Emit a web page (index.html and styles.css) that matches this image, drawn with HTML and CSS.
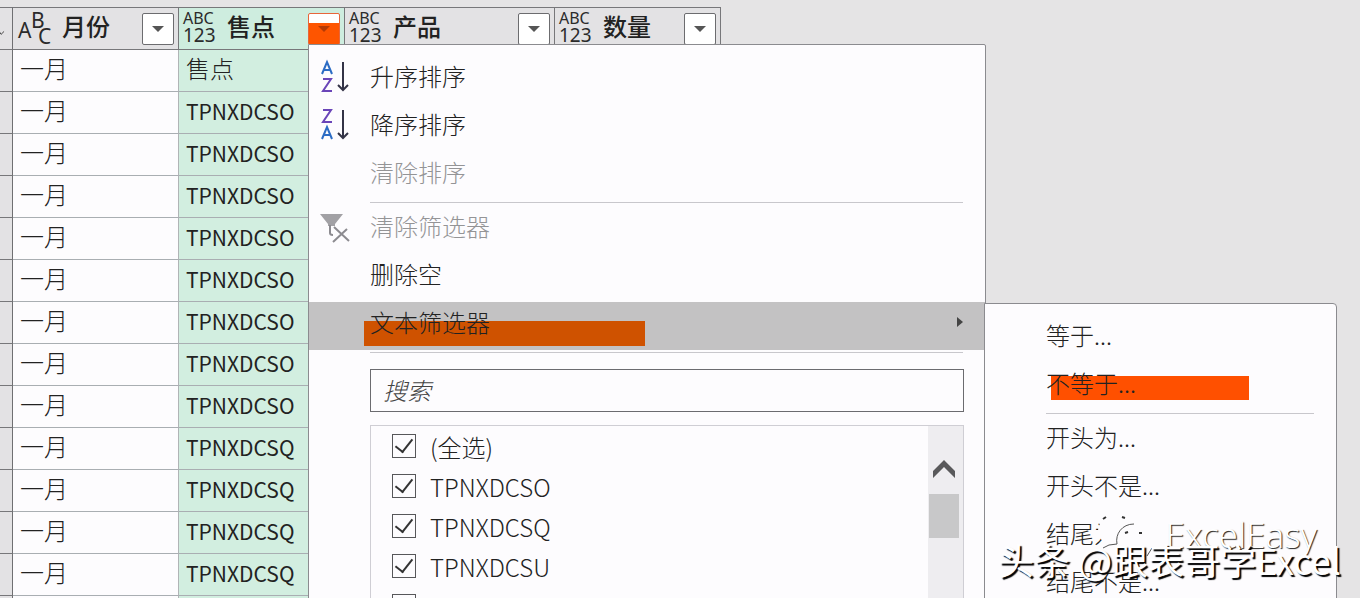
FILE: index.html
```html
<!DOCTYPE html>
<html lang="zh-CN">

<head>
    <meta charset="UTF-8">
    <meta name="viewport" content="width=device-width, initial-scale=1.0">
    <title>售点</title>
    <link rel="stylesheet" href="styles.css">
</head>

<body>

    <main class="editor">
        <table class="grid">
            <thead>
                <tr>
                    <th class="gutter"><svg class="corner" viewBox="0 0 12 42"><path d="M-1 24l2 3 3-3" /></svg></th>
                    <th class="month">
                        <div class="head">
                            <svg class="type" viewBox="0 0 36 36">
                                <text class="letter" x="1" y="27">A</text>
                                <text class="letter" x="14" y="17">B</text>
                                <text class="letter" x="21" y="33">C</text>
                            </svg>
                            <span class="title title-wide">月份</span>
                            <button class="filter" aria-label="筛选月份"><svg viewBox="0 0 12 6"><path d="M0 0h12L6 6z" /></svg></button>
                        </div>
                    </th>
                    <th class="site">
                        <div class="head">
                            <svg class="type" viewBox="0 0 36 36">
                                <text class="abc" x="0" y="13">ABC</text>
                                <text class="num" x="0" y="31">123</text>
                            </svg>
                            <span class="title">售点</span>
                            <button class="filter filter-open" aria-label="筛选售点"><svg viewBox="0 0 12 6"><path d="M0 0h12L6 6z" /></svg></button>
                        </div>

                        <div class="menu">
                            <button class="item">
                                <svg class="icon" viewBox="0 0 32 36">
                                    <path class="blue" d="M3 16L8 4l5 12M5 12h6" />
                                    <path class="purple" d="M4 21h8L4 33h9" />
                                    <path class="ink" d="M24 4v28M19 27l5 5 5-5" />
                                </svg>
                                升序排序
                            </button>
                            <button class="item">
                                <svg class="icon" viewBox="0 0 32 36">
                                    <path class="purple" d="M4 4h8L4 16h9" />
                                    <path class="blue" d="M3 33l5-12 5 12M5 29h6" />
                                    <path class="ink" d="M24 4v28M19 27l5 5 5-5" />
                                </svg>
                                降序排序
                            </button>
                            <button class="item" disabled>清除排序</button>
                            <hr class="line">
                            <button class="item" disabled>
                                <svg class="icon" viewBox="0 0 32 36">
                                    <path class="funnel" d="M1 6h23l-8 10v2H9v-2z" />
                                    <path class="grey" d="M11 17v8q0 2 3 2M15 19l15 14M28 21L14 34" />
                                </svg>
                                清除筛选器
                            </button>
                            <button class="item">删除空</button>
                            <button class="item item-active">
                                <span class="mark"></span>
                                <span class="label">文本筛选器</span>
                                <svg class="arrow" viewBox="0 0 6 10"><path d="M0 0l6 5-6 5z" /></svg>
                            </button>
                            <hr class="line line-tight">
                            <input class="search" type="text" placeholder="搜索" aria-label="搜索">
                            <div class="values">
                                <div class="options">
                                    <label><input type="checkbox" checked>(全选)</label>
                                    <label><input type="checkbox" checked>TPNXDCSO</label>
                                    <label><input type="checkbox" checked>TPNXDCSQ</label>
                                    <label><input type="checkbox" checked>TPNXDCSU</label>
                                    <label><input type="checkbox" checked aria-label="TPNXDCSX"></label>
                                </div>
                                <div class="scrollbar">
                                    <svg viewBox="0 0 22 18"><path d="M0 11L11 0l11 11v7L11 7 0 18z" /></svg>
                                    <div class="thumb"></div>
                                </div>
                            </div>

                            <div class="submenu">
                                <button class="item">等于...</button>
                                <button class="item">
                                    <span class="mark mark-bright"></span>
                                    <span class="label">不等于...</span>
                                </button>
                                <hr class="line">
                                <button class="item">开头为...</button>
                                <button class="item">开头不是...</button>
                                <button class="item">结尾为...</button>
                                <button class="item">结尾不是...</button>
                            </div>
                        </div>
                    </th>
                    <th class="product">
                        <div class="head">
                            <svg class="type" viewBox="0 0 36 36">
                                <text class="abc" x="0" y="13">ABC</text>
                                <text class="num" x="0" y="31">123</text>
                            </svg>
                            <span class="title">产品</span>
                            <button class="filter" aria-label="筛选产品"><svg viewBox="0 0 12 6"><path d="M0 0h12L6 6z" /></svg></button>
                        </div>
                    </th>
                    <th class="amount">
                        <div class="head">
                            <svg class="type" viewBox="0 0 36 36">
                                <text class="abc" x="0" y="13">ABC</text>
                                <text class="num" x="0" y="31">123</text>
                            </svg>
                            <span class="title">数量</span>
                            <button class="filter" aria-label="筛选数量"><svg viewBox="0 0 12 6"><path d="M0 0h12L6 6z" /></svg></button>
                        </div>
                    </th>
                </tr>
            </thead>
            <tbody>
                <tr><td class="gutter"></td><td>一月</td><td class="picked">售点</td></tr>
                <tr><td class="gutter"></td><td>一月</td><td class="picked">TPNXDCSO</td></tr>
                <tr><td class="gutter"></td><td>一月</td><td class="picked">TPNXDCSO</td></tr>
                <tr><td class="gutter"></td><td>一月</td><td class="picked">TPNXDCSO</td></tr>
                <tr><td class="gutter"></td><td>一月</td><td class="picked">TPNXDCSO</td></tr>
                <tr><td class="gutter"></td><td>一月</td><td class="picked">TPNXDCSO</td></tr>
                <tr><td class="gutter"></td><td>一月</td><td class="picked">TPNXDCSO</td></tr>
                <tr><td class="gutter"></td><td>一月</td><td class="picked">TPNXDCSO</td></tr>
                <tr><td class="gutter"></td><td>一月</td><td class="picked">TPNXDCSO</td></tr>
                <tr><td class="gutter"></td><td>一月</td><td class="picked">TPNXDCSQ</td></tr>
                <tr><td class="gutter"></td><td>一月</td><td class="picked">TPNXDCSQ</td></tr>
                <tr><td class="gutter"></td><td>一月</td><td class="picked">TPNXDCSQ</td></tr>
                <tr><td class="gutter"></td><td>一月</td><td class="picked">TPNXDCSQ</td></tr>
                <tr><td class="gutter"></td><td></td><td class="picked"></td></tr>
            </tbody>
        </table>
    </main>

    <!-- Watermarks over the page -->
    <div class="watermark account">
        <svg viewBox="0 0 56 44">
            <path class="bubble" d="M20 3C9 3 2 10 2 18c0 5 3 9 7 12l-2 6 7-3 6 1c10 0 18-7 18-15S31 3 20 3z" />
            <path class="bubble" d="M37 15c-9 0-16 6-16 13s7 13 16 13l5-1 6 3-1-5c4-3 6-6 6-10 0-7-7-13-16-13z" />
            <path class="rim" d="M7 35l6-3 8-1c-2-10 5-20 17-20M51 43l5-8" />
            <path class="eye" d="M7 6l3-2M26 4l3 1M29 20l3-1M43 20h3" />
        </svg>
        <span>ExcelEasy</span>
    </div>
    <div class="watermark author">头条 @跟表哥学Excel</div>

</body>

</html>
```
FILE: styles.css
```css
* {
    box-sizing: border-box;
}

body {
    margin: 0;
    position: relative;
    height: 100vh;
    overflow: hidden;
    background: #e5e4e5;
    color: #222;
    font-family: 'Noto Sans CJK SC', sans-serif;
    font-weight: 300;
}

button,
input {
    font: inherit;
    color: inherit;
}

.editor {
    padding-top: 7px;
}

/* Data grid */
.grid {
    border-collapse: separate;
    border-spacing: 0;
    table-layout: fixed;
    width: 721px;
}

th {
    height: 43px;
    padding: 0;
    font-weight: 300;
    text-align: left;
    border-top: 1px solid #77777a;
    border-right: 1px solid #77777a;
    border-bottom: 1px solid #77777a;
    background: #e3e2e4;
}

td {
    height: 42px;
    padding: 0 7px 5px;
    font-size: 24px;
    line-height: 36px;
    background: #fdfcfe;
    border-right: 1px solid #b0b4b6;
    border-bottom: 1px solid #a9aeb2;
}

.gutter {
    width: 13px;
    padding: 0;
    background: #e3e2e4;
    border-right: 1px solid #6f6f72;
    border-bottom-color: #77777a;
}

.month {
    width: 166px;
}

.site {
    width: 166px;
    position: relative;
    background: #ceeddf;
}

.product {
    width: 210px;
}

.amount {
    width: 166px;
}

.picked {
    padding-bottom: 3px;
    background: #d2eee0;
    font-size: 21px;
    font-weight: 400;
}

tr:first-child .picked {
    padding-bottom: 5px;
    font-size: 24px;
    font-weight: 300;
}

.corner {
    display: block;
    width: 12px;
    height: 41px;
    fill: none;
    stroke: #444;
}

.head {
    display: flex;
    align-items: center;
    height: 41px;
    padding: 0 4px;
}

.type {
    flex: none;
    width: 36px;
    height: 36px;
    overflow: visible;
    fill: #2b2b2b;
    font-family: 'Noto Sans', sans-serif;
    font-weight: 400;
}

.letter {
    font-size: 21px;
}

.abc {
    font-size: 16px;
}

.num {
    font-size: 19px;
}

.title {
    flex: 1;
    padding-left: 8px;
    padding-bottom: 6px;
    font-size: 24px;
    font-weight: 500;
    line-height: 34px;
}

.title-wide {
    padding-left: 9px;
}

.filter {
    display: flex;
    align-items: center;
    justify-content: center;
    width: 32px;
    height: 32px;
    padding: 0;
    background: #fff;
    border: 1px solid #6c6c6f;
    border-radius: 2px;
}

.filter svg {
    width: 12px;
    height: 6px;
    fill: #555;
}

.filter-open {
    background: linear-gradient(#fff 9px, #fe5500 9px);
    border-color: #e8653a;
}

.filter-open svg {
    fill: #b53a05;
}

/* Filter drop-down */
.menu {
    position: absolute;
    z-index: 1;
    top: 36px;
    left: 129px;
    width: 678px;
    padding-top: 8px;
    background: #fdfcfe;
    border: 1px solid #8b8b8f;
    border-radius: 0 2px 0 0;
}

.item {
    display: flex;
    align-items: center;
    position: relative;
    width: 100%;
    height: 48px;
    padding: 0 22px 2px 61px;
    border: 0;
    background: none;
    font-size: 24px;
    line-height: 36px;
    text-align: left;
}

.item:disabled {
    color: #949496;
}

.item-active {
    margin-top: 3px;
    padding-bottom: 8px;
    background: #c3c2c3;
}

.label {
    position: relative;
    flex: 1;
}

.icon {
    width: 32px;
    height: 36px;
    margin-left: -51px;
    margin-right: 19px;
    fill: none;
    stroke-width: 2;
}

.blue {
    stroke: #2c6cc4;
}

.purple {
    stroke: #6a45b8;
}

.ink {
    stroke: #333346;
}

.grey {
    stroke: #8c8b90;
}

.funnel {
    fill: #a2a1a5;
}

.arrow {
    width: 6px;
    height: 10px;
    fill: #444;
}

/* Highlighter strokes */
.mark {
    position: absolute;
    top: 19px;
    left: 55px;
    width: 281px;
    height: 25px;
    background: #cf5200;
}

.mark-bright {
    top: 16px;
    left: 66px;
    width: 198px;
    height: 24px;
    background: #ff5000;
}

.line {
    height: 6px;
    margin: 0 22px 0 61px;
    border: 0;
    border-bottom: 1px solid #c8c7cc;
}

.line-tight {
    height: 3px;
}

.search {
    display: block;
    width: calc(100% - 82px);
    height: 43px;
    margin: 16px 21px 13px 61px;
    padding: 0 12px 2px;
    border: 1px solid #6b6b6f;
    background: #fdfcfe;
    font-size: 24px;
    font-style: italic;
}

.search::placeholder {
    color: #444;
}

.values {
    display: flex;
    height: 240px;
    margin: 0 21px 12px 61px;
    border: 1px solid #cfced4;
    overflow: hidden;
}

.options {
    flex: 1;
}

.options label {
    display: flex;
    align-items: center;
    gap: 14px;
    height: 40px;
    padding-left: 21px;
    font-size: 24px;
}

.options input {
    appearance: none;
    display: grid;
    place-items: center;
    width: 24px;
    height: 24px;
    margin: 0;
    border: 1px solid #57575a;
}

.options input:checked::before {
    content: '';
    width: 8px;
    height: 15px;
    margin-bottom: 5px;
    border-right: 2px solid #333;
    border-bottom: 2px solid #333;
    transform: rotate(38deg);
}

.scrollbar {
    display: flex;
    flex-direction: column;
    align-items: center;
    width: 35px;
    padding-right: 3px;
    padding-top: 34px;
    background: #eeedf0;
}

.scrollbar svg {
    width: 22px;
    height: 18px;
    fill: #59595b;
}

.thumb {
    width: 30px;
    height: 44px;
    margin-top: 16px;
    background: #c8c8c9;
}

.submenu {
    position: absolute;
    top: 258px;
    left: 675px;
    width: 353px;
    padding: 8px 0;
    background: #fdfcfe;
    border: 1px solid #8b8b8f;
    border-radius: 0 4px 4px 0;
}

/* Watermarks */
.watermark {
    position: absolute;
    z-index: 2;
    color: #fff;
    white-space: nowrap;
    text-shadow: 1px 1px 1px #222;
}

.account {
    display: flex;
    align-items: center;
    gap: 14px;
    right: 43px;
    bottom: 40px;
    font-family: 'Noto Sans', sans-serif;
    font-size: 35px;
    line-height: 46px;
}

.account svg {
    width: 56px;
    height: 44px;
}

.bubble {
    fill: #fdfcfe;
}

.rim {
    fill: none;
    stroke: #555;
}

.eye {
    stroke: #333;
    stroke-width: 2;
}

.author {
    right: 19px;
    bottom: 14px;
    font-size: 36px;
    font-weight: 400;
    line-height: 50px;
    text-shadow: 2px 2px 1px #000;
}
```
